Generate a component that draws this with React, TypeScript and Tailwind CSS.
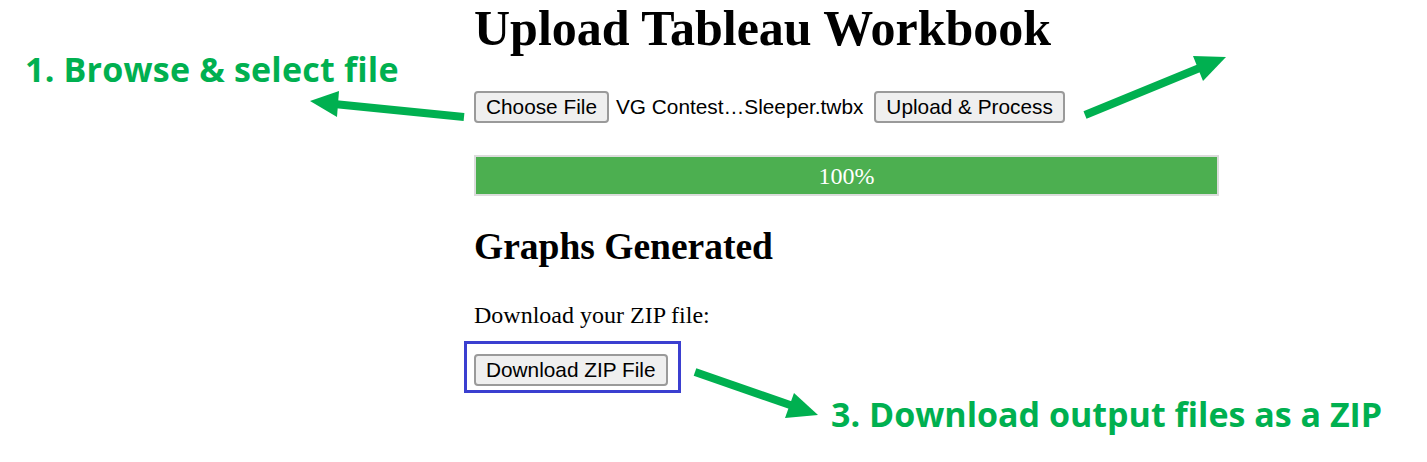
import React from "react";

// --- Shared class strings ---
const serif = "font-['Liberation_Serif','Times_New_Roman',serif]";
const sans = "font-['Liberation_Sans',Arial,sans-serif]";
const btn =
  "h-[32px] px-[10px] bg-[#efefef] border-2 border-[#9a9a9a] rounded-[4px] text-[20.8px] leading-none text-black font-['Liberation_Sans',Arial,sans-serif]";
const note =
  "absolute text-[34px] leading-[34px] font-bold text-[#00b050] font-['Open_Sans',sans-serif] whitespace-nowrap";

const Arrows = () => (
  <svg
    className="absolute inset-0 pointer-events-none"
    width={1427}
    height={462}
    viewBox="0 0 1427 462"
  >
    {/* 1. browse arrow */}
    <line x1={464} y1={117} x2={334} y2={104} stroke="#00b050" strokeWidth={8} />
    <polygon points="310,101 339,91 337,117" fill="#00b050" />
    {/* 2. upload arrow */}
    <line x1={1085} y1={115} x2={1202} y2={67} stroke="#00b050" strokeWidth={8} />
    <polygon points="1226,57 1193,56 1203,81" fill="#00b050" />
    {/* 3. download arrow */}
    <line x1={695} y1={372} x2={793} y2={406} stroke="#00b050" strokeWidth={8} />
    <polygon points="818,415 785,418 794,393" fill="#00b050" />
  </svg>
);

const App = () => {
  return (
    <main className="relative w-[1427px] h-[462px] bg-white overflow-hidden text-black">
      <div className={`flex flex-col pl-[474px] w-[1219px] ${serif}`}>
        <h1 className="text-[50px] leading-[56px] font-bold whitespace-nowrap">
          Upload Tableau Workbook
        </h1>

        <div className="mt-[35px] flex items-center h-[32px]">
          <button className={btn}>Choose File</button>
          <span className={`ml-[7px] mr-[11px] text-[20.8px] ${sans}`}>
            VG Contest…Sleeper.twbx
          </span>
          <button className={btn}>Upload &amp; Process</button>
        </div>

        <div className="mt-[32px] h-[41px] flex items-center justify-center bg-[#4caf50] border-2 border-[#dcdcdc] text-white text-[24px]">
          100%
        </div>

        <h2 className="mt-[33px] text-[37.5px] leading-[36px] font-bold">
          Graphs Generated
        </h2>

        <p className="mt-[38px] text-[24px] leading-[24px]">
          Download your ZIP file:
        </p>

        <div className="mt-[27px] flex">
          <button className={btn}>Download ZIP File</button>
        </div>
      </div>

      {/* annotation overlays */}
      <div className="absolute left-[464px] top-[341px] w-[217px] h-[52px] border-[3px] border-[#3b3fd0]" />
      <Arrows />
      <div className={`${note} left-[25px] top-[52px] tracking-[0.2px]`}>
        1. Browse &amp; select file
      </div>
      <div className={`${note} left-[831px] top-[397px]`}>
        3. Download output files as a ZIP
      </div>
    </main>
  );
};

export default App;
